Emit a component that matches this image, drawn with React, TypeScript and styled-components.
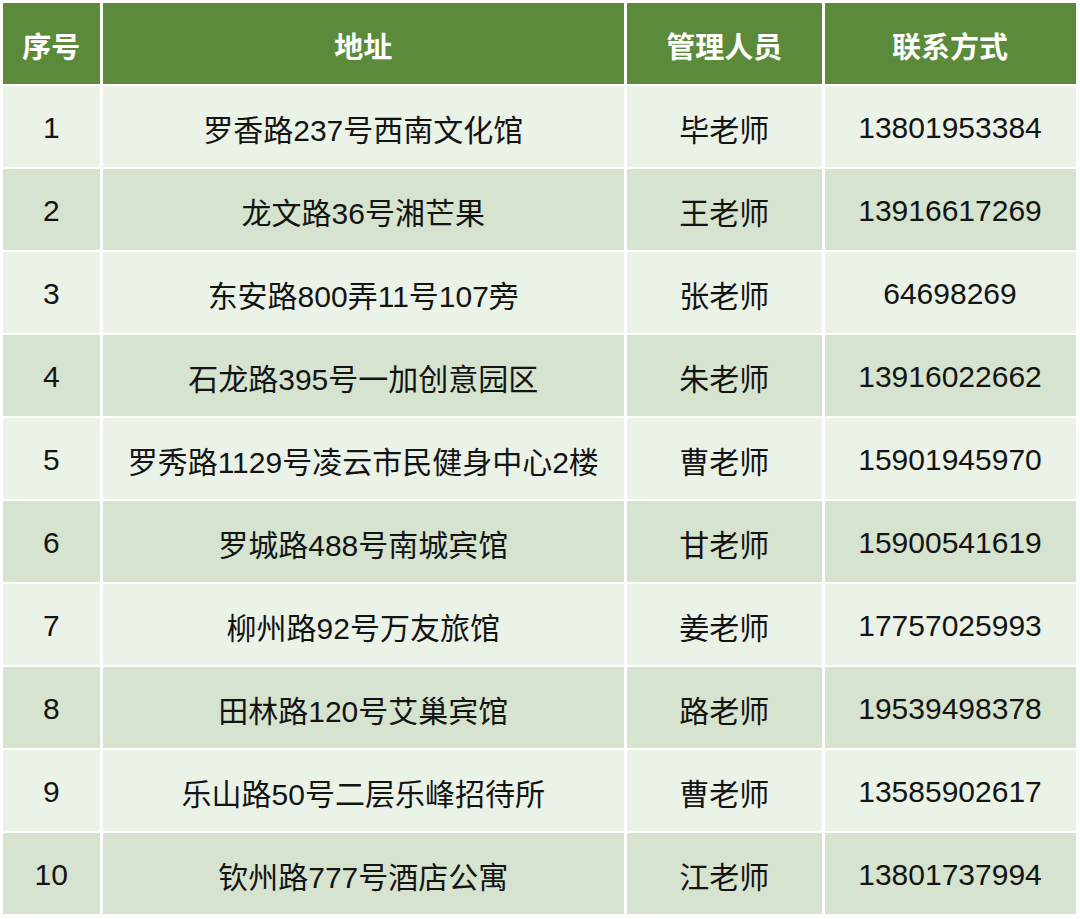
import React from "react";
import styled, { createGlobalStyle } from "styled-components";

const GlobalStyle = createGlobalStyle`
	html, body {
		margin: 0;
		padding: 0;
		background: #ffffff;
	}
	body {
		font-family: "Liberation Sans", "Noto Sans CJK SC", sans-serif;
	}
`;

const Grid = styled.div`
	display: grid;
	grid-template-columns: 97.5px 521.5px 195.5px 251px;
	grid-auto-rows: 80.5px;
	gap: 2.5px;
	padding: 3px 2.5px 0 2.5px;
	font-family: "Liberation Sans", "Noto Sans CJK SC", sans-serif;
`;

const HeadCell = styled.div`
	display: flex;
	align-items: center;
	justify-content: center;
	padding-top: 4px;
	box-sizing: border-box;
	background-color: #5b8a3a;
	color: #ffffff;
	font-size: 29px;
	font-weight: bold;
`;

const Cell = styled.div<{ $shade: boolean }>`
	display: flex;
	align-items: center;
	justify-content: center;
	padding-top: 4px;
	box-sizing: border-box;
	background-color: ${(p) => (p.$shade ? "#d5e3cf" : "#ebf2e8")};
	color: #141414;
	font-size: 30px;
	white-space: nowrap;
`;

const headers = ["序号", "地址", "管理人员", "联系方式"];

const rows = [
	["1", "罗香路237号西南文化馆", "毕老师", "13801953384"],
	["2", "龙文路36号湘芒果", "王老师", "13916617269"],
	["3", "东安路800弄11号107旁", "张老师", "64698269"],
	["4", "石龙路395号一加创意园区", "朱老师", "13916022662"],
	["5", "罗秀路1129号凌云市民健身中心2楼", "曹老师", "15901945970"],
	["6", "罗城路488号南城宾馆", "甘老师", "15900541619"],
	["7", "柳州路92号万友旅馆", "姜老师", "17757025993"],
	["8", "田林路120号艾巢宾馆", "路老师", "19539498378"],
	["9", "乐山路50号二层乐峰招待所", "曹老师", "13585902617"],
	["10", "钦州路777号酒店公寓", "江老师", "13801737994"],
];

const App = () => {
	return (
		<>
			<GlobalStyle />
			<Grid>
				{headers.map((h) => (
					<HeadCell key={h}>{h}</HeadCell>
				))}
				{rows.map((r, i) =>
					r.map((v, j) => (
						<Cell key={`${i}-${j}`} $shade={i % 2 === 1}>
							{v}
						</Cell>
					))
				)}
			</Grid>
		</>
	);
};

export default App;
